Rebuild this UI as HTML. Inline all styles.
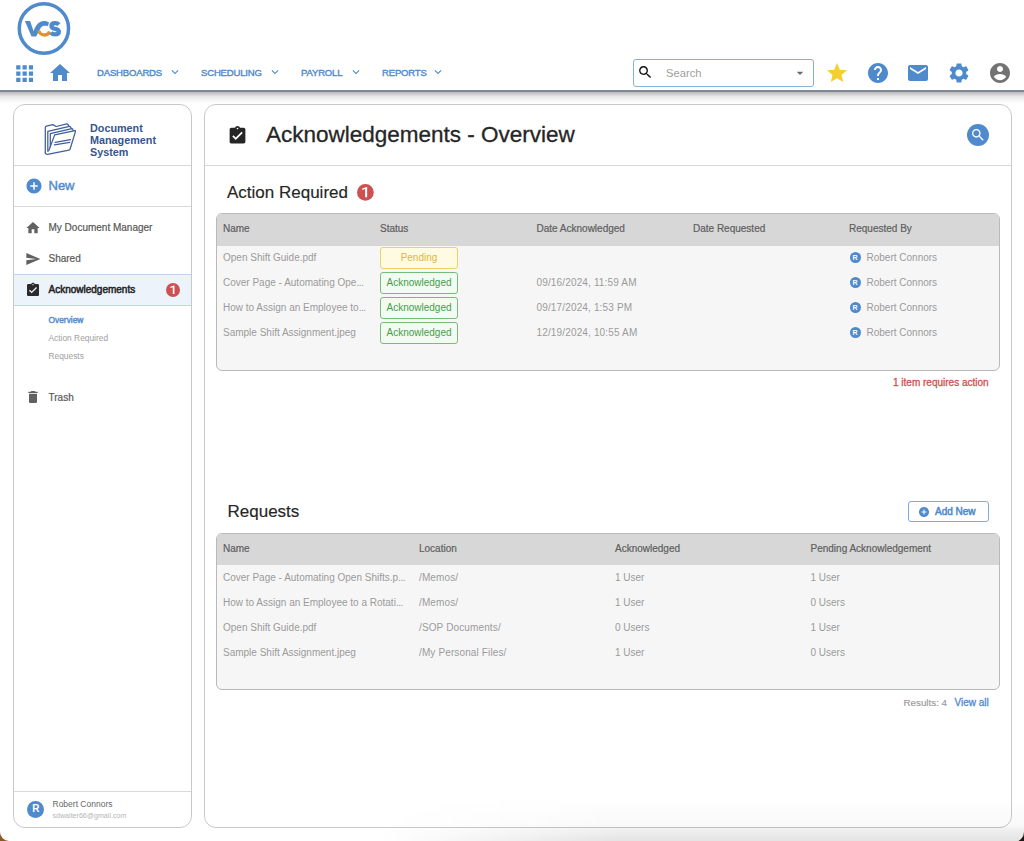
<!DOCTYPE html>
<html><head><meta charset="utf-8">
<style>
*{box-sizing:border-box;margin:0;padding:0}
html,body{width:1024px;height:841px;overflow:hidden;background:#fff;font-family:"Liberation Sans",sans-serif;position:relative}
.a{position:absolute}
.t{position:absolute;white-space:nowrap;line-height:1}
svg{display:block}
#hdr{left:0;top:0;width:1024px;height:90px;background:#fff}
#hline{left:0;top:90px;width:1024px;height:2px;background:#7d8797}
#hshadow{left:0;top:92px;width:1024px;height:12px;background:linear-gradient(#b9b9b9,#e9e9e9 40%,#fbfbfb 85%,#fff)}
.nav{font-size:9.5px;color:#4f8acd;letter-spacing:-0.15px;-webkit-text-stroke:0.4px #4f8acd}
.panel{border:1px solid #c9c9c9;border-radius:12px;background:#fff}
.side{font-size:10px;color:#575757;-webkit-text-stroke:0.2px #575757}
.sub{font-size:8.4px;color:#a0a0a0}
.tbl{border:1px solid #b9b9b9;border-radius:6px;background:#f6f6f6;overflow:hidden}
.th{background:#d7d7d7}
.hc{font-size:10px;color:#606060;-webkit-text-stroke:0.2px #606060}
.c{font-size:10px;color:#9b9b9b}
.badge{position:absolute;width:78px;height:22px;border-radius:3px;font-size:10px;text-align:center;line-height:20px}
.pend{border:1px solid #f0cf6a;background:#fffbe3;color:#e0b63a}
.ack{border:1px solid #79bb79;background:#f1fbf1;color:#4b9b4b}
.av{position:absolute;width:11px;height:11px;border-radius:50%;background:#4f8acd;color:#fff;font-size:7px;font-weight:bold;text-align:center;line-height:11px}
</style></head><body>
<!-- header -->
<div id="hdr" class="a"></div>
<div id="hline" class="a"></div>
<div id="hshadow" class="a"></div>

<!-- logo -->
<svg class="a" style="left:0;top:0" width="80" height="60" viewBox="0 0 80 60">
  <circle cx="43.9" cy="28.5" r="24.65" fill="none" stroke="#4f8acd" stroke-width="3.5"/>
  <path d="M24.9 21 L30.1 21 L33.6 31.3 C34.2 29 35.5 26 37.5 24 C39.3 22 41.5 21 44.2 21 C46 21 47.6 21.6 49 22.4 L48 25.9 C46.8 25.9 45.7 25.8 44.3 25.8 C42.7 25.8 41.3 26.8 40.5 28.2 L36.2 36.5 L31.5 36.5 Z" fill="#4f8acd"/>
  <path d="M39 30.4 A5.4 4.6 0 0 0 49.6 31.6" fill="none" stroke="#e1922d" stroke-width="3.3"/>
  <path d="M58.9 24.6 C58 23.6 56.8 23.15 55.2 23.15 C52.8 23.15 51.45 24.3 51.45 25.9 C51.45 27.8 53.2 28.4 55.2 28.8 C57.5 29.2 58.85 30 58.85 31.8 C58.85 33.4 57.3 34.35 55 34.35 C53.2 34.35 51.9 33.7 51 32.6" fill="none" stroke="#4f8acd" stroke-width="4.3"/>
</svg>

<!-- apps grid -->
<svg class="a" style="left:12px;top:60.8px" width="25.3" height="25.3" viewBox="0 0 24 24"><path fill="#4f8acd" d="M4 8h4V4H4v4zm6 12h4v-4h-4v4zm-6 0h4v-4H4v4zm0-6h4v-4H4v4zm6 0h4v-4h-4v4zm6-10v4h4V4h-4zm-6 4h4V4h-4v4zm6 6h4v-4h-4v4zm0 6h4v-4h-4v4z"/></svg>
<!-- home -->
<svg class="a" style="left:48px;top:61px" width="24" height="24" viewBox="0 0 24 24"><path fill="#4f8acd" d="M10 20v-6h4v6h5v-8h3L12 3 2 12h3v8z"/></svg>

<div class="t nav" style="left:97px;top:68px">DASHBOARDS</div>
<div class="t nav" style="left:201px;top:68px">SCHEDULING</div>
<div class="t nav" style="left:301px;top:68px">PAYROLL</div>
<div class="t nav" style="left:382px;top:68px">REPORTS</div>
<svg class="a" style="left:167.5px;top:64.8px" width="14" height="14" viewBox="0 0 24 24"><path fill="#4f8acd" d="M16.59 8.59L12 13.17 7.41 8.59 6 10l6 6 6-6z"/></svg>
<svg class="a" style="left:268.3px;top:64.8px" width="14" height="14" viewBox="0 0 24 24"><path fill="#4f8acd" d="M16.59 8.59L12 13.17 7.41 8.59 6 10l6 6 6-6z"/></svg>
<svg class="a" style="left:349.2px;top:64.8px" width="14" height="14" viewBox="0 0 24 24"><path fill="#4f8acd" d="M16.59 8.59L12 13.17 7.41 8.59 6 10l6 6 6-6z"/></svg>
<svg class="a" style="left:430.9px;top:64.8px" width="14" height="14" viewBox="0 0 24 24"><path fill="#4f8acd" d="M16.59 8.59L12 13.17 7.41 8.59 6 10l6 6 6-6z"/></svg>

<!-- search box -->
<div class="a" style="left:633px;top:59px;width:181px;height:28px;border:1.2px solid #86b0e0;border-radius:3px;background:#fff"></div>
<svg class="a" style="left:636.9px;top:64.4px" width="16.5" height="16.5" viewBox="0 0 24 24"><path fill="#111" d="M15.5 14h-.79l-.28-.27C15.41 12.590 16 11.11 16 9.5 16 5.91 13.09 3 9.5 3S3 5.91 3 9.5 5.91 16 9.5 16c1.61 0 3.09-.59 4.23-1.57l.27.28v.79l5 4.99L20.49 19l-4.99-5zm-6 0C7.01 14 5 11.99 5 9.5S7.01 5 9.5 5 14 7.01 14 9.5 11.99 14 9.5 14z"/></svg>
<div class="t" style="left:666px;top:68px;font-size:11.2px;color:#9e9e9e">Search</div>
<svg class="a" style="left:791.5px;top:64.6px" width="16" height="16" viewBox="0 0 24 24"><path fill="#6b6b6b" d="M7 10l5 5 5-5z"/></svg>

<!-- right icons -->
<svg class="a" style="left:825px;top:61px" width="24" height="24" viewBox="0 0 24 24"><path fill="#f4cf2f" d="M12 17.27L18.18 21l-1.64-7.03L22 9.24l-7.19-.61L12 2 9.19 8.63 2 9.24l5.46 4.73L5.82 21z"/></svg>
<svg class="a" style="left:866px;top:61px" width="24" height="24" viewBox="0 0 24 24"><path fill="#4f8acd" d="M12 2C6.48 2 2 6.48 2 12s4.48 10 10 10 10-4.48 10-10S17.52 2 12 2zm1 17h-2v-2h2v2zm2.07-7.75l-.9.92C13.45 12.9 13 13.5 13 15h-2v-.5c0-1.1.45-2.1 1.17-2.830l1.24-1.26c.37-.36.59-.86.59-1.410 0-1.1-.9-2-2-2s-2 .9-2 2H8c0-2.21 1.79-4 4-4s4 1.79 4 4c0 .88-.36 1.68-.93 2.25z"/></svg>
<svg class="a" style="left:906px;top:61px" width="24" height="24" viewBox="0 0 24 24"><path fill="#4f8acd" d="M20 4H4c-1.1 0-1.99.9-1.99 2L2 18c0 1.1.9 2 2 2h16c1.1 0 2-.9 2-2V6c0-1.1-.9-2-2-2zm0 4l-8 5-8-5V6l8 5 8-5v2z"/></svg>
<svg class="a" style="left:947px;top:61px" width="24" height="24" viewBox="0 0 24 24"><path fill="#4f8acd" d="M19.14 12.94c.04-.3.06-.61.06-.94 0-.32-.02-.64-.07-.94l2.03-1.58c.18-.14.23-.41.12-.61l-1.92-3.32c-.12-.22-.37-.29-.59-.22l-2.39.96c-.5-.38-1.030-.7-1.62-.94l-.36-2.54c-.04-.24-.24-.41-.48-.41h-3.84c-.24 0-.43.17-.47.41l-.36 2.54c-.59.24-1.13.57-1.62.94l-2.39-.96c-.22-.08-.47 0-.59.22L2.74 8.87c-.12.21-.08.47.12.61l2.03 1.58c-.05.3-.09.63-.09.94s.02.64.07.94l-2.03 1.58c-.18.14-.23.41-.12.61l1.92 3.32c.12.22.37.29.59.22l2.39-.96c.5.38 1.03.7 1.62.94l.36 2.54c.05.24.24.41.48.41h3.840c.24 0 .44-.17.47-.41l.36-2.54c.59-.24 1.13-.56 1.62-.94l2.39.96c.22.08.47 0 .59-.22l1.92-3.32c.12-.22.07-.47-.12-.61l-2.01-1.58zM12 15.6c-1.98 0-3.6-1.62-3.6-3.6s1.62-3.6 3.6-3.6 3.6 1.62 3.6 3.6-1.62 3.6-3.6 3.6z"/></svg>
<svg class="a" style="left:988px;top:61px" width="24" height="24" viewBox="0 0 24 24"><path fill="#737373" d="M12 2C6.48 2 2 6.48 2 12s4.48 10 10 10 10-4.48 10-10S17.52 2 12 2zm0 3c1.66 0 3 1.34 3 3s-1.34 3-3 3-3-1.34-3-3 1.34-3 3-3zm0 14.2c-2.5 0-4.71-1.28-6-3.22.03-1.99 4-3.08 6-3.08 1.99 0 5.970 1.09 6 3.08-1.29 1.94-3.5 3.22-6 3.22z"/></svg>

<!-- SIDEBAR -->
<div class="a panel" style="left:13px;top:104px;width:179px;height:724px"></div>
<div class="a" style="left:14px;top:165px;width:177px;height:1px;background:#d9d9d9"></div>
<div class="a" style="left:14px;top:206px;width:177px;height:1px;background:#d9d9d9"></div>
<!-- folder icon -->
<svg class="a" style="left:40px;top:119px" width="40" height="40" viewBox="40 119 40 40">
  <g fill="none" stroke="#3d5f9b" stroke-width="1.25" stroke-linejoin="round" stroke-linecap="round">
    <path d="M45.3 152.6 L45.3 127.6 Q45.3 126.5 46.4 126.2 L52.8 124.6 L56.2 126.5 L66.8 123.9 Q67.6 123.8 68.1 124.6 L68.7 126"/>
    <path d="M45.3 152.6 Q45.5 154.6 47.6 154.3 L68.8 150.1 Q69.9 149.9 70.2 148.8 L75.5 131.4 Q75.6 130.6 74.9 130.7"/>
    <path d="M48.7 150.8 L54.7 134.9 L74.9 130.7"/>
    <path d="M47.8 151.2 L47.8 131.3 L69.4 126.4 Q70.2 126.3 70.6 127.1 L71.3 128.3"/>
    <path d="M50.3 146.8 L50.3 133.6 L71.8 128.7 Q72.5 128.6 72.8 129.4 L73.2 130.5"/>
    <path d="M55.2 142.4 L70.5 139.6"/>
    <path d="M54.4 144.9 L69.8 142.3"/>
  </g>
</svg>
<div class="a" style="left:90px;top:121.7px;font-size:10.8px;line-height:12px;font-weight:bold;color:#34568f;white-space:nowrap">Document<br>Management<br>System</div>
<!-- New -->
<svg class="a" style="left:24.5px;top:176.5px" width="18" height="18" viewBox="0 0 24 24"><path fill="#4f8acd" d="M12 2C6.48 2 2 6.48 2 12s4.48 10 10 10 10-4.48 10-10S17.52 2 12 2zm5 11h-4v4h-2v-4H7v-2h4V7h2v4h4v2z"/></svg>
<div class="t" style="left:48.5px;top:179px;font-size:13px;color:#4f8acd;-webkit-text-stroke:0.4px #4f8acd">New</div>

<svg class="a" style="left:25.3px;top:220px" width="16" height="16" viewBox="0 0 24 24"><path fill="#616161" d="M10 20v-6h4v6h5v-8h3L12 3 2 12h3v8z"/></svg>
<div class="t side" style="left:48.5px;top:223px">My Document Manager</div>
<svg class="a" style="left:24.6px;top:251px" width="16" height="16" viewBox="0 0 24 24"><path fill="#616161" d="M2.01 21L23 12 2.01 3 2 10l15 2-15 2z"/></svg>
<div class="t side" style="left:48.5px;top:254px">Shared</div>
<div class="a" style="left:14px;top:274px;width:177px;height:32px;background:#ecf3fb;border-top:1px solid #bcd4ee;border-bottom:1px solid #bcd4ee"></div>
<svg class="a" style="left:25px;top:281.5px" width="16" height="16" viewBox="0 0 24 24"><path fill="#2b2b2b" d="M19 3h-4.18C14.4 1.84 13.3 1 12 1c-1.3 0-2.4.84-2.82 2H5c-1.1 0-2 .9-2 2v14c0 1.1.9 2 2 2h14c1.1 0 2-.9 2-2V5c0-1.1-.9-2-2-2zm-7 0c.55 0 1 .45 1 1s-.45 1-1 1-1-.45-1-1 .45-1 1-1zm-2 14l-4-4 1.41-1.41L10 14.17l6.59-6.59L18 9l-8 8z"/></svg>
<div class="t side" style="left:48.5px;top:285px;color:#252525;-webkit-text-stroke:0.5px #252525">Acknowledgements</div>
<svg class="a" style="left:166px;top:283.4px" width="14" height="14" viewBox="0 0 16.8 16.8"><circle cx="8.4" cy="8.4" r="8.4" fill="#cd5151"/><path fill="#fff" d="M8.1 13.2 L10.15 13.2 L10.15 3.1 L9.6 3.1 L5.2 4.6 L5.2 6.0 L8.1 5.1 Z"/></svg>
<div class="t" style="left:48.5px;top:316px;font-size:8.4px;color:#4f8acd;-webkit-text-stroke:0.4px #4f8acd">Overview</div>
<div class="t sub" style="left:48.5px;top:334px">Action Required</div>
<div class="t sub" style="left:48.5px;top:352px">Requests</div>
<svg class="a" style="left:25px;top:389px" width="16" height="16" viewBox="0 0 24 24"><path fill="#616161" d="M6 19c0 1.1.9 2 2 2h8c1.1 0 2-.9 2-2V7H6v12zM19 4h-3.5l-1-1h-5l-1 1H5v2h14V4z"/></svg>
<div class="t side" style="left:48.5px;top:393px">Trash</div>

<div class="a" style="left:14px;top:791px;width:177px;height:1px;background:#d9d9d9"></div>
<div class="a" style="left:27.4px;top:801.1px;width:16.8px;height:16.8px;border-radius:50%;background:#4f8acd;color:#fff;font-size:10px;font-weight:bold;text-align:center;line-height:16.8px">R</div>
<div class="t" style="left:52.5px;top:800px;font-size:8.5px;color:#666">Robert Connors</div>
<div class="t" style="left:52.5px;top:813px;font-size:7.1px;color:#b5b5b5">sdwalter66@gmail.com</div>

<!-- MAIN PANEL -->
<div class="a panel" style="left:204px;top:104px;width:808px;height:724px"></div>
<div class="a" style="left:205px;top:165px;width:806px;height:1px;background:#d9d9d9"></div>
<svg class="a" style="left:226.7px;top:125.1px" width="21" height="21" viewBox="0 0 24 24"><path fill="#262626" d="M19 3h-4.18C14.4 1.84 13.3 1 12 1c-1.3 0-2.4.84-2.82 2H5c-1.1 0-2 .9-2 2v14c0 1.1.9 2 2 2h14c1.1 0 2-.9 2-2V5c0-1.1-.9-2-2-2zm-7 0c.55 0 1 .45 1 1s-.45 1-1 1-1-.45-1-1 .45-1 1-1zm-2 14l-4-4 1.41-1.41L10 14.17l6.59-6.59L18 9l-8 8z"/></svg>
<div class="t" style="left:266px;top:123.75px;font-size:22.5px;color:#262626;-webkit-text-stroke:0.3px #262626">Acknowledgements - Overview</div>
<div class="a" style="left:966.6px;top:124px;width:22.3px;height:22.3px;border-radius:50%;background:#4f8acd"></div>
<svg class="a" style="left:969.5px;top:127px" width="16" height="16" viewBox="0 0 24 24"><path fill="#fff" d="M15.5 14h-.79l-.28-.27C15.41 12.59 16 11.11 16 9.5 16 5.91 13.09 3 9.5 3S3 5.91 3 9.5 5.91 16 9.5 16c1.61 0 3.09-.59 4.23-1.57l.27.28v.79l5 4.99L20.49 19l-4.99-5zm-6 0C7.01 14 5 11.99 5 9.5S7.01 5 9.5 5 14 7.01 14 9.5 11.99 14 9.5 14z"/></svg>

<!-- Action Required -->
<div class="t" style="left:227px;top:184px;font-size:17px;color:#262626;-webkit-text-stroke:0.15px #262626">Action Required</div>
<svg class="a" style="left:357px;top:183.9px" width="16.8" height="16.8" viewBox="0 0 16.8 16.8"><circle cx="8.4" cy="8.4" r="8.4" fill="#cd5151"/><path fill="#fff" d="M8.1 13.2 L10.15 13.2 L10.15 3.1 L9.6 3.1 L5.2 4.6 L5.2 6.0 L8.1 5.1 Z"/></svg>

<div class="a tbl" style="left:216px;top:213px;width:784px;height:158px">
  <div class="a th" style="left:0;top:0;width:782px;height:32px"></div>
</div>
<div class="t hc" style="left:223px;top:224px">Name</div>
<div class="t hc" style="left:380px;top:224px">Status</div>
<div class="t hc" style="left:536.5px;top:224px">Date Acknowledged</div>
<div class="t hc" style="left:693px;top:224px">Date Requested</div>
<div class="t hc" style="left:849px;top:224px">Requested By</div>

<div class="t c" style="left:223px;top:253px">Open Shift Guide.pdf</div>
<div class="t c" style="left:223px;top:278px">Cover Page - Automating Ope<span style="letter-spacing:-0.5px">...</span></div>
<div class="t c" style="left:223px;top:303px">How to Assign an Employee to<span style="letter-spacing:-0.5px">...</span></div>
<div class="t c" style="left:223px;top:328px">Sample Shift Assignment.jpeg</div>
<div class="badge pend" style="left:380px;top:247px">Pending</div>
<div class="badge ack" style="left:380px;top:272px">Acknowledged</div>
<div class="badge ack" style="left:380px;top:297px">Acknowledged</div>
<div class="badge ack" style="left:380px;top:322px">Acknowledged</div>
<div class="t c" style="left:536.5px;top:278px;letter-spacing:0.15px">09/16/2024, 11:59 AM</div>
<div class="t c" style="left:536.5px;top:303px;letter-spacing:0.15px">09/17/2024, 1:53 PM</div>
<div class="t c" style="left:536.5px;top:328px;letter-spacing:0.15px">12/19/2024, 10:55 AM</div>
<div class="av" style="left:849.5px;top:252.2px">R</div><div class="t c" style="left:866.5px;top:253px">Robert Connors</div>
<div class="av" style="left:849.5px;top:277.2px">R</div><div class="t c" style="left:866.5px;top:278px">Robert Connors</div>
<div class="av" style="left:849.5px;top:302.2px">R</div><div class="t c" style="left:866.5px;top:303px">Robert Connors</div>
<div class="av" style="left:849.5px;top:327.2px">R</div><div class="t c" style="left:866.5px;top:328px">Robert Connors</div>
<div class="t" style="left:893px;top:378px;font-size:10px;color:#cc5252;-webkit-text-stroke:0.3px #cc5252">1 item requires action</div>

<!-- Requests -->
<div class="t" style="left:227.5px;top:503px;font-size:17px;color:#262626;-webkit-text-stroke:0.15px #262626">Requests</div>
<div class="a" style="left:908px;top:501px;width:81px;height:21px;border:1px solid #80abdd;border-radius:3px;background:#fff"></div>
<svg class="a" style="left:918.2px;top:505.6px" width="12" height="12" viewBox="0 0 24 24"><path fill="#4f8acd" d="M12 2C6.48 2 2 6.48 2 12s4.48 10 10 10 10-4.48 10-10S17.52 2 12 2zm5 11h-4v4h-2v-4H7v-2h4V7h2v4h4v2z"/></svg>
<div class="t" style="left:935px;top:507px;font-size:10px;color:#4f8acd;-webkit-text-stroke:0.5px #4f8acd">Add New</div>

<div class="a tbl" style="left:216px;top:533px;width:784px;height:157px">
  <div class="a th" style="left:0;top:0;width:782px;height:31px"></div>
</div>
<div class="t hc" style="left:223px;top:544px">Name</div>
<div class="t hc" style="left:419px;top:544px">Location</div>
<div class="t hc" style="left:615px;top:544px">Acknowledged</div>
<div class="t hc" style="left:810.5px;top:544px">Pending Acknowledgement</div>

<div class="t c" style="left:223px;top:573px">Cover Page - Automating Open Shifts.p<span style="letter-spacing:-0.5px">...</span></div>
<div class="t c" style="left:223px;top:598px">How to Assign an Employee to a Rotati<span style="letter-spacing:-0.5px">...</span></div>
<div class="t c" style="left:223px;top:623px">Open Shift Guide.pdf</div>
<div class="t c" style="left:223px;top:648px">Sample Shift Assignment.jpeg</div>
<div class="t c" style="left:419px;top:573px;letter-spacing:0.13px">/Memos/</div>
<div class="t c" style="left:419px;top:598px;letter-spacing:0.13px">/Memos/</div>
<div class="t c" style="left:419px;top:623px;letter-spacing:0.13px">/SOP Documents/</div>
<div class="t c" style="left:419px;top:648px;letter-spacing:0.13px">/My Personal Files/</div>
<div class="t c" style="left:615px;top:573px">1 User</div>
<div class="t c" style="left:615px;top:598px">1 User</div>
<div class="t c" style="left:615px;top:623px">0 Users</div>
<div class="t c" style="left:615px;top:648px">1 User</div>
<div class="t c" style="left:810.5px;top:573px">1 User</div>
<div class="t c" style="left:810.5px;top:598px">0 Users</div>
<div class="t c" style="left:810.5px;top:623px">1 User</div>
<div class="t c" style="left:810.5px;top:648px">0 Users</div>
<div class="t" style="left:903.5px;top:698px;font-size:9.8px;color:#9a9a9a;-webkit-text-stroke:0.15px #9a9a9a">Results: 4</div>
<div class="t" style="left:954.5px;top:698px;font-size:10px;color:#4f8acd;-webkit-text-stroke:0.3px #4f8acd">View all</div>


<!-- bottom shading & window corners -->
<div class="a" style="left:0;top:798px;width:1024px;height:43px;background:linear-gradient(rgba(0,0,0,0),rgba(0,0,0,0.025) 65%,rgba(0,0,0,0.05) 70%,rgba(0,0,0,0.11));-webkit-mask-image:linear-gradient(to right,transparent 380px,#000 620px)"></div>
<svg class="a" style="left:0;top:821px" width="20" height="20" viewBox="0 821 20 20"><path d="M0 832 A9 9 0 0 0 9 841 L0 841 Z" fill="#8b5a24"/></svg>
<svg class="a" style="left:1004px;top:821px" width="20" height="20" viewBox="1004 821 20 20"><path d="M1024 832 A10 10 0 0 1 1014 842 L1024 842 Z" fill="#1e1614"/></svg>
</body></html>
